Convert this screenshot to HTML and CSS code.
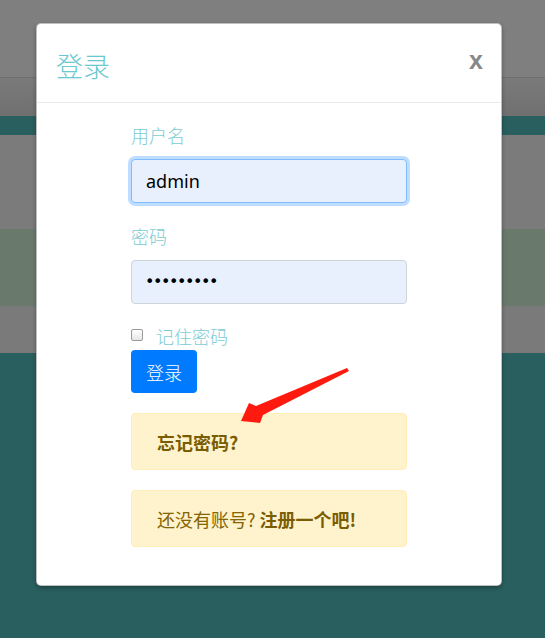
FILE: index.html
```html
<!DOCTYPE html>
<html lang="zh">
<head>
<meta charset="utf-8">
<link rel="stylesheet" href="styles.css">
</head>
<body>
<div class="page">
  <div class="band band-top"></div>
  <div class="band band-nav"></div>
  <div class="band band-teal"></div>
  <div class="band band-gray"></div>
  <div class="band band-green"></div>
  <div class="band band-gray2"></div>
  <div class="band band-foot"></div>
</div>

<div class="modal">
  <div class="modal-header">
    <h4 class="modal-title">登录</h4>
    <span class="close">x</span>
  </div>
  <div class="modal-body">
    <form class="login-form">
      <div class="form-group">
        <label class="label">用户名</label>
        <div class="input input-focus">admin</div>
      </div>
      <div class="form-group">
        <label class="label">密码</label>
        <div class="input input-pass">•••••••••</div>
      </div>
      <div class="check-row">
        <span class="checkbox"></span>
        <span class="label check-label">记住密码</span>
      </div>
      <button type="button" class="btn">登录</button>
      <div class="alert"><b>忘记密码?</b></div>
      <div class="alert">还没有账号? <b>注册一个吧!</b></div>
    </form>
  </div>
</div>

<svg class="arrow" width="545" height="638" viewBox="0 0 545 638">
  <polygon fill="#ff1a0f" points="241,421 249,403 256,406 347,368 349,371 263,415 260,423"/>
</svg>
</body>
</html>
```

FILE: styles.css
```css
* { box-sizing: border-box; }
html, body { margin: 0; padding: 0; }
body {
  width: 545px;
  height: 638px;
  overflow: hidden;
  position: relative;
  background: #2a5f5f;
  font-family: "Noto Sans CJK SC", sans-serif;
}
.page { display: flex; flex-direction: column; }
.band-top { height: 78px; background: #7f7f7f; border-bottom: 1px solid #6e6e6e; }
.band-nav { height: 38px; background: linear-gradient(#7a7a7a, #707070); }
.band-teal { height: 19px; background: #2a5f5f; }
.band-gray { height: 94px; background: #7b7b7b; }
.band-green { height: 77px; background: #697a6d; }
.band-gray2 { height: 47px; background: #7a7a7a; }
.band-foot { height: 285px; background: #2a5f5f; }

.modal {
  position: absolute;
  left: 36px;
  top: 23px;
  width: 466px;
  height: 563px;
  background: #fff;
  border: 1px solid rgba(0,0,0,.25);
  border-radius: 5px;
  box-shadow: 0 2px 4px rgba(0,0,0,.3);
}
.modal-header {
  height: 79px;
  border-bottom: 1px solid #e9ecef;
  display: flex;
  align-items: center;
  justify-content: space-between;
  padding: 0 18px 0 19px;
}
.modal-title {
  margin: 0;
  font-weight: 300;
  font-size: 27px;
  color: #6ac8d0;
  line-height: 1;
  padding-top: 5px;
}
.close {
  font-family: "Liberation Sans", sans-serif;
  font-weight: bold;
  font-size: 25px;
  color: #888;
  line-height: 1;
  margin-top: -6px;
}
.modal-body { padding: 19px 0 0; }
.login-form {
  width: 276px;
  margin: 0 auto;
  display: flex;
  flex-direction: column;
  align-items: flex-start;
}
.form-group {
  width: 100%;
  display: flex;
  flex-direction: column;
  margin-bottom: 20px;
}
.label {
  font-size: 18px;
  font-weight: 300;
  color: #7ccbd3;
  line-height: 27px;
  margin-bottom: 10px;
}
.input {
  height: 44px;
  width: 100%;
  background: #e8f0fe;
  border: 1px solid #ced4da;
  border-radius: 4px;
  padding: 0 14px;
  font-family: "Noto Sans", sans-serif;
  font-size: 18px;
  line-height: 42px;
  color: #000;
}
.input-focus {
  border-color: #80bdff;
  box-shadow: 0 0 0 3px rgba(0,123,255,.25);
}
.input-pass {
  font-family: "DejaVu Sans", sans-serif;
  font-size: 16px;
  letter-spacing: -1.45px;
  padding-left: 13px;
}
.check-row {
  display: flex;
  align-items: center;
  height: 27px;
  margin-top: -1px;
}
.checkbox {
  width: 12px;
  height: 12px;
  border: 1px solid #999;
  border-radius: 2px;
  background: linear-gradient(#fff, #e6e6e6);
  margin-right: 13px;
  margin-top: -3px;
}
.check-label { margin: 0; }
.btn {
  background: #007bff;
  color: #fff;
  border: 0;
  border-radius: 4px;
  height: 43px;
  padding: 0 15px;
  font-family: "Noto Sans CJK SC", sans-serif;
  font-weight: 300;
  font-size: 18px;
  margin-bottom: 20px;
}
.alert {
  width: 100%;
  height: 57px;
  background: #fff3cd;
  border: 1px solid #ffeeba;
  border-radius: 4px;
  color: #856404;
  font-size: 18px;
  padding: 0 25px;
  display: flex;
  align-items: center;
  margin-bottom: 20px;
  white-space: pre;
}
.alert b { font-weight: 700; color: #7a5c03; }

.arrow { position: absolute; left: 0; top: 0; pointer-events: none; }
```
